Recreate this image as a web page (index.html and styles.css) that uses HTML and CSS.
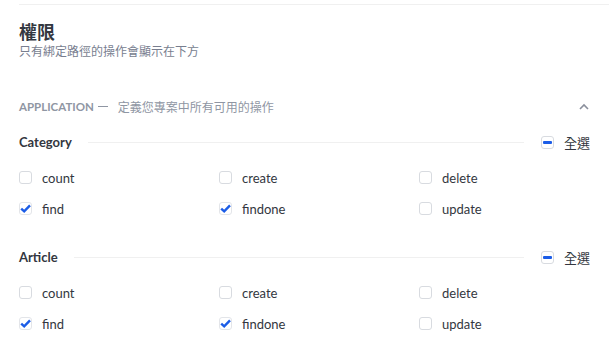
FILE: index.html
```html
<!DOCTYPE html>
<html lang="zh-Hant">
<head>
<meta charset="utf-8">
<link rel="stylesheet" href="styles.css">
</head>
<body>
<div class="page">
  <div class="divider"></div>
  <h1 class="title">權限</h1>
  <p class="subtitle">只有綁定路徑的操作會顯示在下方</p>

  <div class="app-header">
    <span class="app-name">APPLICATION</span>
    <span class="app-dash"></span>
    <span class="app-desc">定義您專案中所有可用的操作</span>
    <svg class="chevron" width="10" height="7" viewBox="0 0 10 7"><path d="M1 6 L5 2 L9 6" fill="none" stroke="#8a8f9c" stroke-width="1.6"/></svg>
  </div>

  <section class="group">
    <div class="group-head">
      <span class="group-name">Category</span>
      <span class="group-line"></span>
      <label class="select-all"><span class="box indeterminate"></span><span>全選</span></label>
    </div>
    <div class="grid">
      <label class="item"><span class="box"></span><span>count</span></label>
      <label class="item"><span class="box"></span><span>create</span></label>
      <label class="item"><span class="box"></span><span>delete</span></label>
      <label class="item"><span class="box checked"><svg width="13" height="13" viewBox="0 0 13 13"><path d="M2.2 6.6 L5.2 9.4 L11 3.4" fill="none" stroke="#1c5de7" stroke-width="2.4"/></svg></span><span>find</span></label>
      <label class="item"><span class="box checked"><svg width="13" height="13" viewBox="0 0 13 13"><path d="M2.2 6.6 L5.2 9.4 L11 3.4" fill="none" stroke="#1c5de7" stroke-width="2.4"/></svg></span><span>findone</span></label>
      <label class="item"><span class="box"></span><span>update</span></label>
    </div>
  </section>

  <section class="group">
    <div class="group-head">
      <span class="group-name">Article</span>
      <span class="group-line"></span>
      <label class="select-all"><span class="box indeterminate"></span><span>全選</span></label>
    </div>
    <div class="grid">
      <label class="item"><span class="box"></span><span>count</span></label>
      <label class="item"><span class="box"></span><span>create</span></label>
      <label class="item"><span class="box"></span><span>delete</span></label>
      <label class="item"><span class="box checked"><svg width="13" height="13" viewBox="0 0 13 13"><path d="M2.2 6.6 L5.2 9.4 L11 3.4" fill="none" stroke="#1c5de7" stroke-width="2.4"/></svg></span><span>find</span></label>
      <label class="item"><span class="box checked"><svg width="13" height="13" viewBox="0 0 13 13"><path d="M2.2 6.6 L5.2 9.4 L11 3.4" fill="none" stroke="#1c5de7" stroke-width="2.4"/></svg></span><span>findone</span></label>
      <label class="item"><span class="box"></span><span>update</span></label>
    </div>
  </section>
</div>
</body>
</html>
```

FILE: styles.css
```css
* { box-sizing: border-box; }
html, body { margin: 0; padding: 0; background: #ffffff; }
body {
  font-family: Lato, "Noto Sans CJK TC", sans-serif;
  color: #333740;
  overflow: hidden;
}
.page {
  padding: 4px 19px 0 19px;
}
.divider {
  height: 1px;
  background: #f0f0f0;
  margin-right: -19px;
}
.title {
  margin: 16px 0 0 0;
  font-size: 18px;
  line-height: 22px;
  font-weight: 700;
  color: #333740;
}
.subtitle {
  margin: 0;
  font-size: 12px;
  line-height: 18px;
  color: #787e8f;
}
.app-header {
  display: flex;
  align-items: center;
  margin-top: 36px;
  height: 18px;
  font-size: 12px;
  color: #8f96a3;
}
.app-name {
  font-weight: 700;
  color: #8f96a3;
  font-size: 11.5px;
}
.app-dash {
  width: 10px;
  height: 1px;
  background: #8f96a3;
  margin: 1px 10px 0 4px;
}
.app-desc {
  color: #8f96a3;
  flex: 1;
}
.chevron {
  margin-right: 1px;
}
.group {
  margin-top: 18px;
}
.group + .group {
  margin-top: 24px;
}
.group-head {
  display: flex;
  align-items: center;
  height: 18px;
}
.group-name {
  font-size: 13px;
  font-weight: 700;
  color: #333740;
}
.group-line {
  flex: 1;
  height: 1px;
  background: #f0f0f0;
  margin: 1px 17px 0 16px;
}
.select-all {
  display: flex;
  align-items: center;
  font-size: 13px;
  color: #333740;
}
.select-all .box {
  margin-right: 10px;
}
.box {
  width: 13px;
  height: 13px;
  border: 1px solid #d8dbe0;
  border-radius: 3px;
  display: flex;
  align-items: center;
  justify-content: center;
  flex: none;
  background: #fff;
}
.box svg { display: block; margin: -1px; overflow: visible; }
.box.checked { border-color: #e3e5e9; }
.box.indeterminate::after {
  content: "";
  width: 9px;
  height: 3px;
  background: #1c5de7;
  border-radius: 1px;
}
.grid {
  display: grid;
  grid-template-columns: 200px 200px 1fr;
  margin-top: 11px;
}
.item {
  display: flex;
  align-items: center;
  height: 31px;
  font-size: 13px;
  color: #333740;
}
.item .box {
  margin-right: 10px;
}
```
